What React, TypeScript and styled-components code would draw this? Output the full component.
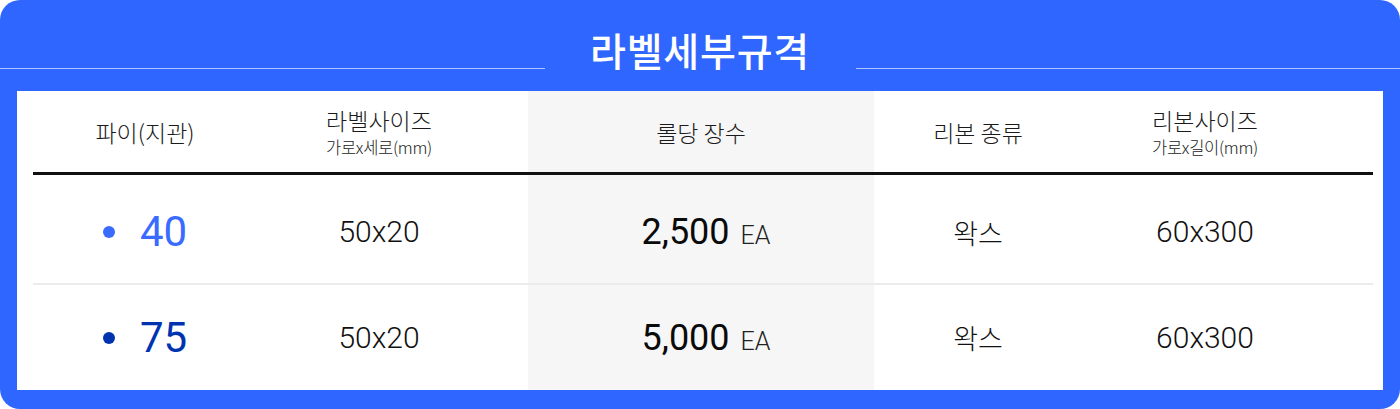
import React from 'react';
import styled, { createGlobalStyle } from 'styled-components';

const GlobalStyle = createGlobalStyle`
  html, body {
    margin: 0;
    padding: 0;
    background: #ffffff;
  }
  body {
    font-family: Roboto, "Noto Sans CJK KR", sans-serif;
    color: #111111;
  }
`;

const BLUE = '#2f66ff';
const COLUMNS = '224px 271px 346px 208px 1fr';

interface SpecRow {
  pipe: string;
  tone: 'light' | 'dark';
  labelSize: string;
  count: string;
  ribbon: string;
  ribbonSize: string;
}

const rows: SpecRow[] = [
  { pipe: '40', tone: 'light', labelSize: '50x20', count: '2,500', ribbon: '왁스', ribbonSize: '60x300' },
  { pipe: '75', tone: 'dark', labelSize: '50x20', count: '5,000', ribbon: '왁스', ribbonSize: '60x300' },
];

const Card = styled.section`
  width: 1400px;
  height: 409px;
  box-sizing: border-box;
  background: ${BLUE};
  border-radius: 20px;
  padding-bottom: 19px;
  display: flex;
  flex-direction: column;
  overflow: hidden;
`;

const TitleBar = styled.header`
  height: 91px;
  display: grid;
  grid-template-columns: 1fr 311px 1fr;
`;

const Rule = styled.div`
  height: 1px;
  margin-top: 68px;
  background: rgba(255, 255, 255, 0.62);
`;

const Title = styled.h2`
  margin: 0;
  padding-top: 28px;
  text-align: center;
  color: #ffffff;
  font-family: "Noto Sans CJK KR", sans-serif;
  font-size: 39px;
  font-weight: 500;
  line-height: 42px;
  letter-spacing: 0.8px;
`;

const Panel = styled.div`
  flex: 1;
  margin: 0 17px;
  background: #ffffff;
  padding: 0 10px 0 16px;
`;

const Row = styled.div<{ $height: number; $line: 'head' | 'soft' | 'none' }>`
  display: grid;
  grid-template-columns: ${COLUMNS};
  height: ${(p) => p.$height}px;
  border-bottom: ${(p) =>
    p.$line === 'head' ? '3px solid #111111' : p.$line === 'soft' ? '2px solid #ebebeb' : 'none'};
`;

const Cell = styled.div<{ $shade?: boolean; $padLeft?: number; $padRight?: number; $shift?: number }>`
  display: flex;
  flex-direction: column;
  align-items: center;
  justify-content: center;
  padding-left: ${(p) => p.$padLeft ?? 0}px;
  padding-right: ${(p) => p.$padRight ?? 0}px;
  padding-top: ${(p) => p.$shift ?? 0}px;
  background: ${(p) => (p.$shade ? '#f6f6f6' : 'transparent')};
`;

const HeadText = styled.div`
  font-family: "Noto Sans CJK KR", sans-serif;
  font-size: 23px;
  font-weight: 300;
  line-height: 28px;
  color: #1a1a1a;
`;

const HeadSub = styled.div`
  margin-top: 2px;
  font-family: "Noto Sans CJK KR", sans-serif;
  font-size: 16.5px;
  font-weight: 300;
  line-height: 22px;
  color: #1a1a1a;
  letter-spacing: -0.3px;
`;

const Pipe = styled.div<{ $tone: 'light' | 'dark' }>`
  display: flex;
  align-items: center;
  gap: 25px;
  color: ${(p) => (p.$tone === 'light' ? '#3a6bff' : '#0033b0')};
  font-family: Roboto, sans-serif;
  font-size: 42px;
  font-weight: 400;
  line-height: 1;
`;

const Dot = styled.span`
  width: 12px;
  height: 12px;
  border-radius: 50%;
  background: currentColor;
`;

const Value = styled.span`
  font-family: Roboto, "Noto Sans CJK KR", sans-serif;
  font-size: 30px;
  font-weight: 300;
  line-height: 1;
  color: #111111;
`;

const Count = styled.span`
  font-family: Roboto, sans-serif;
  font-size: 36px;
  font-weight: 400;
  line-height: 1;
  color: #0a0a0a;
`;

const Unit = styled.span`
  font-family: Roboto, sans-serif;
  font-size: 25px;
  font-weight: 300;
  margin-left: 11px;
  color: #222222;
`;

const Korean = styled.span`
  font-family: "Noto Sans CJK KR", sans-serif;
  font-size: 27px;
  font-weight: 300;
  line-height: 1;
  color: #111111;
`;

export default function App() {
  return (
    <>
      <GlobalStyle />
      <Card>
        <TitleBar>
          <Rule />
          <Title>라벨세부규격</Title>
          <Rule />
        </TitleBar>
        <Panel>
          <Row $height={81} $line="head">
            <Cell>
              <HeadText>파이(지관)</HeadText>
            </Cell>
            <Cell $padRight={27}>
              <HeadText>라벨사이즈</HeadText>
              <HeadSub>가로x세로(mm)</HeadSub>
            </Cell>
            <Cell $shade>
              <HeadText>롤당 장수</HeadText>
            </Cell>
            <Cell>
              <HeadText>리본 종류</HeadText>
            </Cell>
            <Cell $padRight={45}>
              <HeadText>리본사이즈</HeadText>
              <HeadSub>가로x길이(mm)</HeadSub>
            </Cell>
          </Row>
          {rows.map((row, i) => (
            <Row key={row.pipe} $height={i === 0 ? 108 : 105} $line={i === 0 ? 'soft' : 'none'}>
              <Cell $shift={i === 0 ? 6 : 0}>
                <Pipe $tone={row.tone}>
                  <Dot />
                  {row.pipe}
                </Pipe>
              </Cell>
              <Cell $padRight={27} $shift={i === 0 ? 6 : 0}>
                <Value>{row.labelSize}</Value>
              </Cell>
              <Cell $shade $padLeft={10} $shift={i === 0 ? 6 : 0}>
                <Count>
                  {row.count}
                  <Unit>EA</Unit>
                </Count>
              </Cell>
              <Cell $shift={i === 0 ? 6 : 0}>
                <Korean>{row.ribbon}</Korean>
              </Cell>
              <Cell $padRight={45} $shift={i === 0 ? 6 : 0}>
                <Value>{row.ribbonSize}</Value>
              </Cell>
            </Row>
          ))}
        </Panel>
      </Card>
    </>
  );
}
